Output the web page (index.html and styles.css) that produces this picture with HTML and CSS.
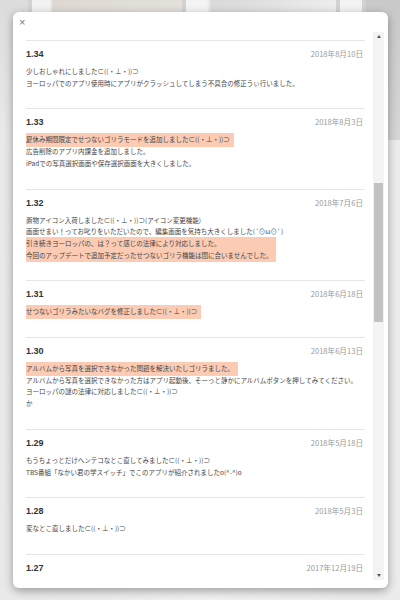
FILE: index.html
```html
<!DOCTYPE html>
<html lang="ja">
<head>
  <meta charset="UTF-8">
  <title>アップデート履歴</title>
  <link rel="stylesheet" href="styles.css">
</head>
<body>
  <div class="backdrop">
    <div class="strip">
      <div class="tile t1"></div>
      <div class="tile t2"></div>
      <div class="tile t3"></div>
      <div class="tile t4"></div>
      <div class="tile t5"></div>
    </div>
    <div class="rest"></div>
  </div>

  <div class="modal">
    <div class="close">×</div>
    <div class="modal-body">
      <div class="list">
        <div class="release">
          <div class="head"><span class="ver">1.34</span><span class="date">2018年8月10日</span></div>
          <div class="notes">
            <p>少しおしゃれにしました⊂((・⊥・))⊃</p>
            <p>ヨーロッパでのアプリ使用時にアプリがクラッシュしてしまう不具合の修正うぃ行いました。</p>
          </div>
        </div>

        <div class="release">
          <div class="head"><span class="ver">1.33</span><span class="date">2018年8月3日</span></div>
          <div class="notes">
            <div class="mark"><p>夏休み期間限定でせつないゴリラモードを追加しました⊂((・⊥・))⊃</p></div>
            <p>広告削除のアプリ内課金を追加しました。</p>
            <p>iPadでの写真選択画面や保存選択画面を大きくしました。</p>
          </div>
        </div>

        <div class="release">
          <div class="head"><span class="ver">1.32</span><span class="date">2018年7月6日</span></div>
          <div class="notes">
            <p>置物アイコン入荷しました⊂((・⊥・))⊃(アイコン変更機能)</p>
            <p>画面せまい！ってお叱りをいただいたので、編集画面を気持ち大きくしました(´⊙ω⊙`)</p>
            <div class="mark">
              <p>引き続きヨーロッパの、は？って感じの法律により対応しました。</p>
              <p>今回のアップデートで追加予定だったせつないゴリラ機能は間に合いませんでした。</p>
            </div>
          </div>
        </div>

        <div class="release">
          <div class="head"><span class="ver">1.31</span><span class="date">2018年6月18日</span></div>
          <div class="notes">
            <div class="mark"><p>せつないゴリラみたいなバグを修正しました⊂((・⊥・))⊃</p></div>
          </div>
        </div>

        <div class="release">
          <div class="head"><span class="ver">1.30</span><span class="date">2018年6月13日</span></div>
          <div class="notes">
            <div class="mark"><p>アルバムから写真を選択できなかった問題を解決いたしゴリラました。</p></div>
            <p>アルバムから写真を選択できなかった方はアプリ起動後、そーっと静かにアルバムボタンを押してみてください。</p>
            <p>ヨーロッパの謎の法律に対応しました⊂((・⊥・))⊃</p>
            <p>か</p>
          </div>
        </div>

        <div class="release">
          <div class="head"><span class="ver">1.29</span><span class="date">2018年5月18日</span></div>
          <div class="notes">
            <p>もうちょっとだけヘンテコなとこ直してみました⊂((・⊥・))⊃</p>
            <p>TBS番組「なかい君の学スイッチ」でこのアプリが紹介されましたo(^-^)o</p>
          </div>
        </div>

        <div class="release">
          <div class="head"><span class="ver">1.28</span><span class="date">2018年5月3日</span></div>
          <div class="notes">
            <p>変なとこ直しました⊂((・⊥・))⊃</p>
          </div>
        </div>

        <div class="release">
          <div class="head"><span class="ver">1.27</span><span class="date">2017年12月19日</span></div>
        </div>
      </div>

      <div class="scrollbar">
        <span class="arrow up"></span>
        <div class="track"><div class="thumb"></div></div>
        <span class="arrow down"></span>
      </div>
    </div>
  </div>
</body>
</html>
```

FILE: styles.css
```css
html, body {
  margin: 0;
  height: 100%;
}
body {
  font-family: "Noto Sans CJK JP", sans-serif;
  background: #eeeeee;
  overflow: hidden;
}

/* blurred page behind the dialog */
.backdrop {
  height: 100%;
  display: flex;
  flex-direction: column;
}
.strip {
  height: 140px;
  display: flex;
  gap: 4px;
  background: #d2d2d2;
}
.tile {
  height: 100%;
}
.t1 { width: 28px; background: linear-gradient(180deg, #dcdcdc, #e9e9e9); }
.t2 { width: 150px; background: linear-gradient(90deg, #f2f2f2 0 12%, #ddd9d2 14%, #e3e0da 100%); }
.t3 { width: 150px; background: linear-gradient(90deg, #f4f4f4 0 14%, #d9d9d9 17%, #e2e2e2 60%, #ededed 100%); }
.t4 { width: 22px; background: #f3f3f3; }
.t5 { flex: 1; background: linear-gradient(180deg, #c9c9c9, #d6d6d6); }
.rest {
  flex: 1;
  background: linear-gradient(90deg, #e9e9e9, #f1f1f1 50%, #ececec);
}

/* dialog */
.modal {
  position: absolute;
  top: 12px;
  left: 13px;
  width: 375px;
  height: 576px;
  background: #fff;
  border-radius: 6px;
  box-shadow: 0 3px 10px rgba(0, 0, 0, 0.35);
  display: flex;
  flex-direction: column;
  overflow: hidden;
}
.close {
  height: 20px;
  padding-left: 6px;
  font-family: "Liberation Sans", sans-serif;
  font-size: 11px;
  line-height: 20px;
  color: #777;
}
.modal-body {
  flex: 1;
  min-height: 0;
  display: flex;
  gap: 8px;
  padding: 0 4px 0 13px;
}
.list {
  flex: 1;
  min-width: 0;
  overflow: hidden;
  padding-top: 8px;
}
.release {
  border-top: 1px solid #e6e6e6;
  padding: 7px 0 19px;
}
.head {
  display: flex;
  justify-content: space-between;
  align-items: baseline;
  padding-right: 2px;
  line-height: 12px;
}
.ver {
  font-family: "Liberation Sans", sans-serif;
  font-weight: bold;
  font-size: 9px;
  color: #333;
}
.date {
  font-size: 7.6px;
  color: #9a9a9a;
}
.notes {
  margin-top: 6px;
  font-size: 6.5px;
  line-height: 11.7px;
  color: #444;
}
.notes p {
  margin: 0;
  white-space: nowrap;
}
.mark {
  width: fit-content;
  background: #fbcbb4;
  padding: 1px 4px;
  margin: -1px -4px;
}

/* scrollbar */
.scrollbar {
  width: 11px;
  display: flex;
  flex-direction: column;
  align-items: center;
  background: #f3f3f3;
  margin-bottom: 8px;
}
.arrow {
  width: 0;
  height: 0;
  margin: 3px 0;
  border-left: 2.5px solid transparent;
  border-right: 2.5px solid transparent;
}
.arrow.up { border-bottom: 3px solid #555; }
.arrow.down { border-top: 3px solid #555; }
.track {
  flex: 1;
  width: 100%;
  padding-top: 142px;
}
.thumb {
  height: 139px;
  margin: 0 1px;
  background: #c2c2c2;
}
```
